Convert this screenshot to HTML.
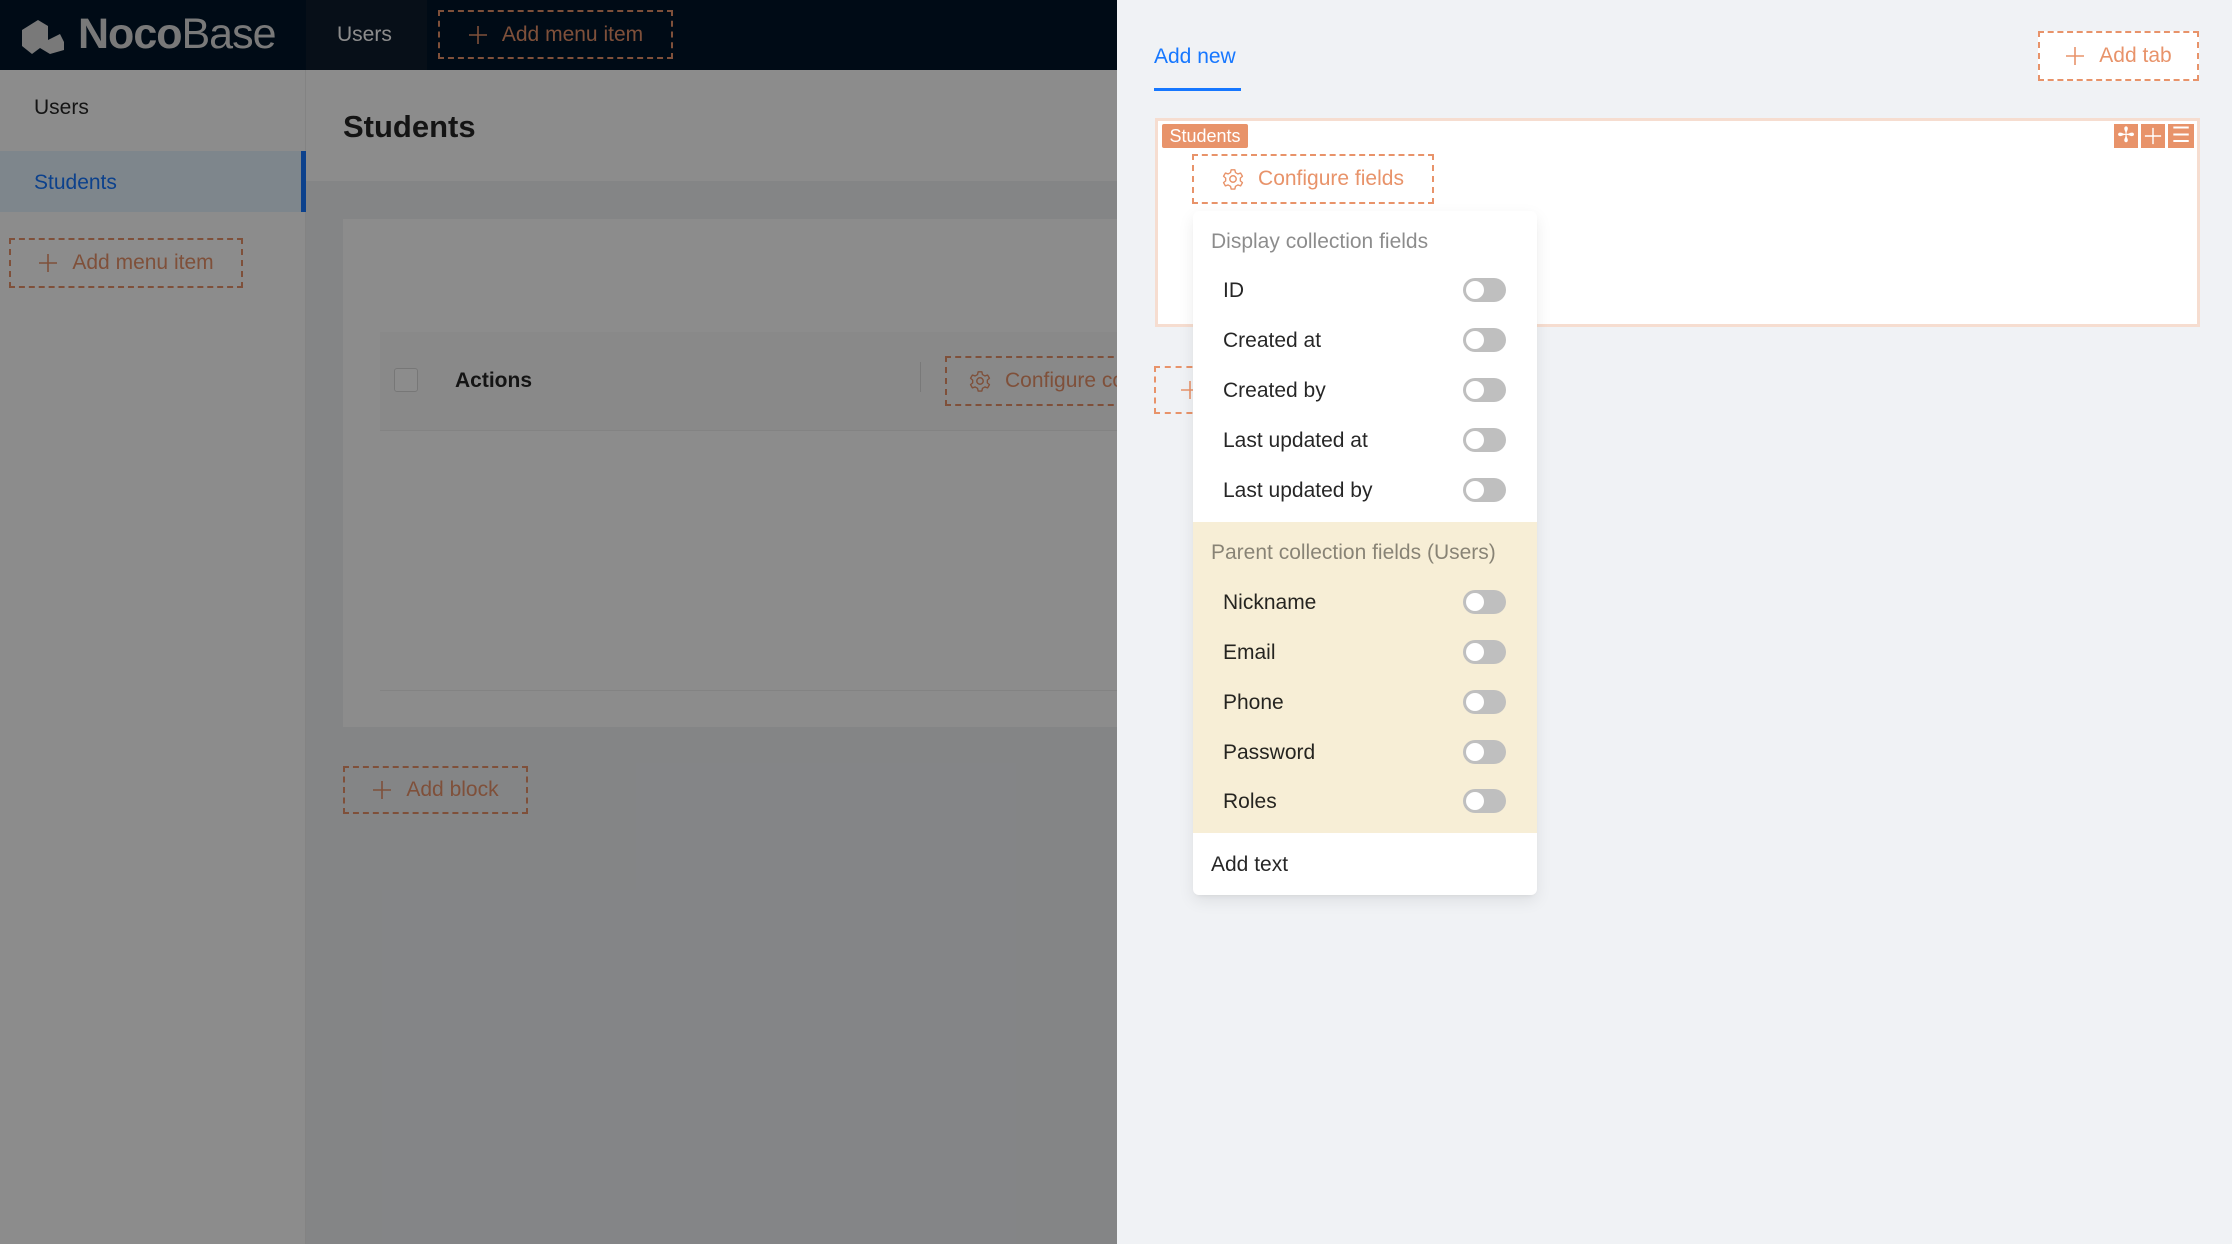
<!DOCTYPE html>
<html><head><meta charset="utf-8"><style>
*{box-sizing:border-box;margin:0;padding:0}
body{width:2232px;height:1244px;position:relative;overflow:hidden;font-family:"Liberation Sans",sans-serif;background:#f0f2f5;font-size:21px;color:rgba(0,0,0,.85)}
.abs{position:absolute}
.dash{border:2px dashed #e8936a;color:#e8936a;display:flex;align-items:center;justify-content:center;gap:14px;font-size:21px;white-space:nowrap;overflow:hidden}
.tog{position:absolute;left:1463px;width:43px;height:24px;border-radius:12px;background:#bfbfbf}
.tog::after{content:"";position:absolute;left:3px;top:3px;width:18px;height:18px;border-radius:50%;background:#fff}
.it{position:absolute;left:1223px;font-size:21px;color:rgba(0,0,0,.85)}
</style></head><body>
<svg width="0" height="0" style="position:absolute"><defs>
<symbol id="p" viewBox="0 0 20 20"><path d="M10 1V19M1 10H19" stroke="currentColor" stroke-width="1.6" fill="none"/></symbol>
<symbol id="g" viewBox="0 0 24 24"><circle cx="12" cy="12" r="3.5" stroke="currentColor" stroke-width="1.6" fill="none"/><path d="M10 2h4l.7 3 2.6 1.5 3-1 2 3.5-2.3 2v3l2.3 2-2 3.5-3-1-2.6 1.5-.7 3h-4l-.7-3-2.6-1.5-3 1-2-3.5 2.3-2v-3l-2.3-2 2-3.5 3 1L9.3 5z" stroke="currentColor" stroke-width="1.5" fill="none" stroke-linejoin="round"/></symbol>
</defs></svg>
<!-- header -->
<div class="abs" style="left:0;top:0;width:1117px;height:70px;background:#001529"></div>
<div class="abs" style="left:306px;top:0;width:121px;height:70px;background:#0e1c2c"></div>
<svg class="abs" style="left:20px;top:14px" width="46" height="42" viewBox="0 0 46 42"><path d="M2 16 L18 6 L28 12 L28 26 L40 20 L44 28 L44 36 L30 40 L20 34 L12 40 L2 32 Z" fill="#ddd"/></svg>
<div class="abs" style="left:78px;top:10px;font-size:43px;color:#ddd;letter-spacing:-1px"><b>Noco</b><span style="font-weight:300">Base</span></div>
<div class="abs" style="left:337px;top:23px;color:#fff;font-size:21px">Users</div>
<div class="abs dash" style="left:438px;top:10px;width:235px;height:49px"><svg width="20" height="20"><use href="#p"/></svg><span>Add menu item</span></div>
<!-- sidebar -->
<div class="abs" style="left:0;top:70px;width:306px;height:1174px;background:#fff;border-right:1px solid #eee"></div>
<div class="abs" style="left:34px;top:96px">Users</div>
<div class="abs" style="left:0;top:151px;width:306px;height:61px;background:#e6f4ff;border-right:5px solid #1677ff"></div>
<div class="abs" style="left:34px;top:171px;color:#1677ff">Students</div>
<div class="abs dash" style="left:9px;top:238px;width:234px;height:50px"><svg width="20" height="20"><use href="#p"/></svg><span>Add menu item</span></div>
<!-- page -->
<div class="abs" style="left:306px;top:70px;width:811px;height:111px;background:#fff"></div>
<div class="abs" style="left:343px;top:109px;font-size:31px;font-weight:bold">Students</div>
<div class="abs" style="left:343px;top:219px;width:774px;height:508px;background:#fff"></div>
<div class="abs" style="left:380px;top:332px;width:737px;height:99px;background:#fafafa;border-bottom:1px solid #eee"></div>
<div class="abs" style="left:394px;top:368px;width:24px;height:24px;border:1px solid #d9d9d9;background:#fff;border-radius:3px"></div>
<div class="abs" style="left:455px;top:369px;font-weight:bold">Actions</div>
<div class="abs" style="left:920px;top:362px;width:1px;height:30px;background:#ddd"></div>
<div class="abs dash" style="left:945px;top:356px;width:240px;height:50px;justify-content:flex-start;padding-left:22px"><svg width="22" height="22"><use href="#g"/></svg><span>Configure columns</span></div>
<div class="abs" style="left:380px;top:690px;width:737px;height:1px;background:#eee"></div>
<div class="abs dash" style="left:343px;top:766px;width:185px;height:48px"><svg width="20" height="20"><use href="#p"/></svg><span>Add block</span></div>
<!-- overlay -->
<div class="abs" style="left:0;top:0;width:1117px;height:1244px;background:rgba(0,0,0,.45)"></div>
<!-- drawer -->
<div class="abs" style="left:1117px;top:0;width:1115px;height:1244px;background:#f0f2f5"></div>
<div class="abs" style="left:1154px;top:45px;color:#1677ff">Add new</div>
<div class="abs" style="left:1154px;top:88px;width:87px;height:3px;background:#1677ff"></div>
<div class="abs dash" style="left:2038px;top:31px;width:161px;height:50px;background:#fff"><svg width="20" height="20"><use href="#p"/></svg><span>Add tab</span></div>
<div class="abs" style="left:1155px;top:118px;width:1045px;height:209px;background:#fff;border:3px solid #f6ddd0"></div>
<div class="abs" style="left:1162px;top:124px;width:86px;height:24px;background:#e8936a;color:#fff;font-size:18px;border-radius:2px;text-align:center;line-height:24px">Students</div>
<div class="abs" style="left:2114px;top:124px;width:24px;height:24px;background:#e8936a;color:#fff;text-align:center;line-height:24px">✢</div>
<div class="abs" style="left:2141px;top:124px;width:24px;height:24px;background:#e8936a;color:#fff;padding:3px"><svg width="18" height="18"><use href="#p"/></svg></div>
<div class="abs" style="left:2168px;top:124px;width:26px;height:24px;background:#e8936a;color:#fff;text-align:center;line-height:24px">☰</div>
<div class="abs dash" style="left:1192px;top:154px;width:242px;height:50px"><svg width="22" height="22"><use href="#g"/></svg><span>Configure fields</span></div>
<div class="abs dash" style="left:1154px;top:366px;width:60px;height:48px;justify-content:flex-start;padding-left:24px"><svg width="20" height="20"><use href="#p"/></svg></div>
<!-- dropdown -->
<div class="abs" style="left:1193px;top:211px;width:344px;height:684px;background:#fff;border-radius:6px;box-shadow:0 6px 16px rgba(0,0,0,.08),0 3px 6px -4px rgba(0,0,0,.12)"></div>
<div class="abs" style="left:1193px;top:522px;width:344px;height:311px;background:#f7eed6"></div>
<div class="abs" style="left:1211px;top:230px;color:rgba(0,0,0,.45)">Display collection fields</div>
<div class="it" style="top:279px">ID</div><div class="tog" style="top:278px"></div>
<div class="it" style="top:329px">Created at</div><div class="tog" style="top:328px"></div>
<div class="it" style="top:379px">Created by</div><div class="tog" style="top:378px"></div>
<div class="it" style="top:429px">Last updated at</div><div class="tog" style="top:428px"></div>
<div class="it" style="top:479px">Last updated by</div><div class="tog" style="top:478px"></div>
<div class="abs" style="left:1211px;top:541px;color:rgba(0,0,0,.45)">Parent collection fields (Users)</div>
<div class="it" style="top:591px">Nickname</div><div class="tog" style="top:590px"></div>
<div class="it" style="top:641px">Email</div><div class="tog" style="top:640px"></div>
<div class="it" style="top:691px">Phone</div><div class="tog" style="top:690px"></div>
<div class="it" style="top:741px">Password</div><div class="tog" style="top:740px"></div>
<div class="it" style="top:790px">Roles</div><div class="tog" style="top:789px"></div>
<div class="abs" style="left:1211px;top:853px">Add text</div>
</body></html>
